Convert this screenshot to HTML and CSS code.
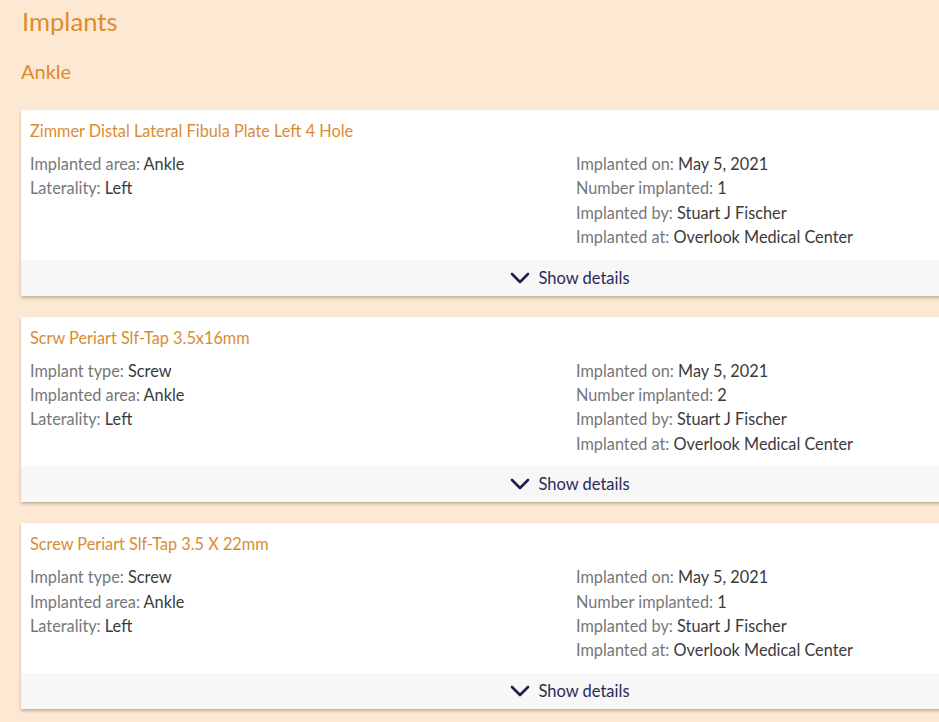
FILE: index.html
```html
<!DOCTYPE html>
<html>
	<head>
		<meta charset="utf-8">
		<title>Implants</title>
		<link rel="stylesheet" href="styles.css">
	</head>
	<body>
		<div class="page">
			<h1 class="page-title">Implants</h1>
			<h2 class="group-title">Ankle</h2>

			<div class="implant">
				<div class="implant-body">
					<div class="implant-name">Zimmer Distal Lateral Fibula Plate Left 4 Hole</div>
					<div class="implant-info">
						<ul class="info-col">
							<li><span class="label">Implanted area:</span> Ankle</li>
							<li><span class="label">Laterality:</span> Left</li>
						</ul>
						<ul class="info-col">
							<li><span class="label">Implanted on:</span> May 5, 2021</li>
							<li><span class="label">Number implanted:</span> 1</li>
							<li><span class="label">Implanted by:</span> Stuart J Fischer</li>
							<li><span class="label">Implanted at:</span> Overlook Medical Center</li>
						</ul>
					</div>
				</div>
				<a class="toggle" href="javascript:;">
					<svg class="chevron" width="20" height="12" viewBox="0 0 20 12"><path d="M2 2 L10 10 L18 2" fill="none" stroke="#1e1f4b" stroke-width="2.6" stroke-linecap="round" stroke-linejoin="round"/></svg>
					<span>Show details</span>
				</a>
			</div>

			<div class="implant">
				<div class="implant-body">
					<div class="implant-name">Scrw Periart Slf-Tap 3.5x16mm</div>
					<div class="implant-info">
						<ul class="info-col">
							<li><span class="label">Implant type:</span> Screw</li>
							<li><span class="label">Implanted area:</span> Ankle</li>
							<li><span class="label">Laterality:</span> Left</li>
						</ul>
						<ul class="info-col">
							<li><span class="label">Implanted on:</span> May 5, 2021</li>
							<li><span class="label">Number implanted:</span> 2</li>
							<li><span class="label">Implanted by:</span> Stuart J Fischer</li>
							<li><span class="label">Implanted at:</span> Overlook Medical Center</li>
						</ul>
					</div>
				</div>
				<a class="toggle" href="javascript:;">
					<svg class="chevron" width="20" height="12" viewBox="0 0 20 12"><path d="M2 2 L10 10 L18 2" fill="none" stroke="#1e1f4b" stroke-width="2.6" stroke-linecap="round" stroke-linejoin="round"/></svg>
					<span>Show details</span>
				</a>
			</div>

			<div class="implant">
				<div class="implant-body">
					<div class="implant-name">Screw Periart Slf-Tap 3.5 X 22mm</div>
					<div class="implant-info">
						<ul class="info-col">
							<li><span class="label">Implant type:</span> Screw</li>
							<li><span class="label">Implanted area:</span> Ankle</li>
							<li><span class="label">Laterality:</span> Left</li>
						</ul>
						<ul class="info-col">
							<li><span class="label">Implanted on:</span> May 5, 2021</li>
							<li><span class="label">Number implanted:</span> 1</li>
							<li><span class="label">Implanted by:</span> Stuart J Fischer</li>
							<li><span class="label">Implanted at:</span> Overlook Medical Center</li>
						</ul>
					</div>
				</div>
				<a class="toggle" href="javascript:;">
					<svg class="chevron" width="20" height="12" viewBox="0 0 20 12"><path d="M2 2 L10 10 L18 2" fill="none" stroke="#1e1f4b" stroke-width="2.6" stroke-linecap="round" stroke-linejoin="round"/></svg>
					<span>Show details</span>
				</a>
			</div>
		</div>
	</body>
</html>
```

FILE: styles.css
```css
* {
  padding: 0;
  margin: 0;
  list-style: none;
  box-sizing: border-box;
}

body {
  background: #fde9d3;
  font-family: Lato, "Open Sans", sans-serif;
}

/* cards are wider than the window, clip them at the right edge */
.page {
  padding: 5px 0 20px 21px;
  overflow: hidden;
}

.page-title {
  font-size: 25.6px;
  line-height: 32px;
  font-weight: normal;
  color: #dc8c2c;
  padding-left: 1px;
}

.group-title {
  font-size: 20px;
  line-height: 26px;
  font-weight: normal;
  color: #dc8c2c;
  margin-top: 21px;
  margin-bottom: 26px;
}

.implant {
  width: 1098px;
  background: #fff;
  box-shadow: 0 2px 3px rgba(90, 70, 50, 0.35);
  margin-bottom: 21px;
}

.implant-body {
  padding: 9px 9px 10px;
}

.implant-name {
  font-size: 16.3px;
  line-height: 24px;
  color: #d98c33;
  margin-bottom: 9px;
}

.implant-info {
  display: grid;
  grid-template-columns: 546px 1fr;
}

.info-col li {
  font-size: 16.3px;
  line-height: 24.4px;
  color: #3a3a3a;
}

.label {
  color: #777;
}

.toggle {
  display: flex;
  justify-content: center;
  align-items: center;
  gap: 8px;
  height: 36px;
  background: #f7f7f7;
  color: #2a2b55;
  font-size: 16.5px;
  text-decoration: none;
}

.chevron {
  display: block;
}
```
